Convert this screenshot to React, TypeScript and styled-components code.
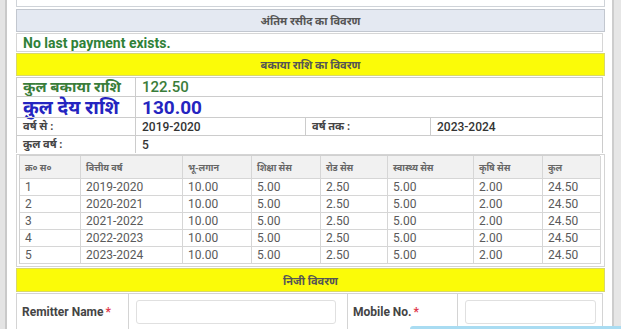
import React from "react";
import styled, { createGlobalStyle } from "styled-components";

const GlobalStyle = createGlobalStyle`
  *, *::before, *::after { box-sizing: border-box; }
  html, body { margin: 0; padding: 0; background: #ffffff; }
  body { font-family: Roboto, "Noto Sans", "Liberation Sans", sans-serif; overflow: hidden; }
`;

type FeeRow = {
  sn: string;
  year: string;
  land: string;
  edu: string;
  road: string;
  health: string;
  agri: string;
  total: string;
};

const feeRows: FeeRow[] = [
  { sn: "1", year: "2019-2020", land: "10.00", edu: "5.00", road: "2.50", health: "5.00", agri: "2.00", total: "24.50" },
  { sn: "2", year: "2020-2021", land: "10.00", edu: "5.00", road: "2.50", health: "5.00", agri: "2.00", total: "24.50" },
  { sn: "3", year: "2021-2022", land: "10.00", edu: "5.00", road: "2.50", health: "5.00", agri: "2.00", total: "24.50" },
  { sn: "4", year: "2022-2023", land: "10.00", edu: "5.00", road: "2.50", health: "5.00", agri: "2.00", total: "24.50" },
  { sn: "5", year: "2023-2024", land: "10.00", edu: "5.00", road: "2.50", health: "5.00", agri: "2.00", total: "24.50" },
];

const feeHeads = ["क्र० स०", "वित्तीय वर्ष", "भू-लगान", "शिक्षा सेस", "रोड सेस", "स्वास्थ्य सेस", "कृषि सेस", "कुल"];

export default function App() {
  return (
    <>
      <GlobalStyle />
      <Shell>
        <LeftRail />
        <Main>
          <TopStub />

          <SectionHead tone="blue">अंतिम रसीद का विवरण</SectionHead>
          <MessageRow>No last payment exists.</MessageRow>

          <SectionHead tone="yellow">बकाया राशि का विवरण</SectionHead>
          <InfoGrid>
            <InfoCell kind="green">कुल बकाया राशि</InfoCell>
            <InfoCell kind="greenValue" span={3}>122.50</InfoCell>
            <InfoCell kind="blue">कुल देय राशि</InfoCell>
            <InfoCell kind="blueValue" span={3}>130.00</InfoCell>
            <InfoCell kind="label">वर्ष से :</InfoCell>
            <InfoCell kind="value">2019-2020</InfoCell>
            <InfoCell kind="label">वर्ष तक :</InfoCell>
            <InfoCell kind="value">2023-2024</InfoCell>
            <InfoCell kind="label">कुल वर्ष :</InfoCell>
            <InfoCell kind="value" span={3}>5</InfoCell>
          </InfoGrid>

          <FeeWrap>
            <FeeGrid>
              {feeHeads.map((h) => (
                <FeeHead key={h}>{h}</FeeHead>
              ))}
              {feeRows.map((r) => (
                <React.Fragment key={r.sn}>
                  <FeeCell>{r.sn}</FeeCell>
                  <FeeCell>{r.year}</FeeCell>
                  <FeeCell>{r.land}</FeeCell>
                  <FeeCell>{r.edu}</FeeCell>
                  <FeeCell>{r.road}</FeeCell>
                  <FeeCell>{r.health}</FeeCell>
                  <FeeCell>{r.agri}</FeeCell>
                  <FeeCell>{r.total}</FeeCell>
                </React.Fragment>
              ))}
            </FeeGrid>
          </FeeWrap>

          <SectionHead tone="yellow" tall>निजी विवरण</SectionHead>
          <FormRow>
            <FormLabel>
              Remitter Name <Req>*</Req>
            </FormLabel>
            <FormField>
              <Input />
            </FormField>
            <FormLabel>
              Mobile No.<Req>*</Req>
            </FormLabel>
            <FormField>
              <Input />
            </FormField>
          </FormRow>
        </Main>
        <RightRail />
        <ToastEdge />
      </Shell>
    </>
  );
}

const Shell = styled.div`
  position: relative;
  display: flex;
  width: 621px;
  height: 329px;
  overflow: hidden;
  background: #ffffff;
`;

const LeftRail = styled.div`
  flex: 0 0 7px;
  background: #e4e4e4;
  border-right: 2px solid #c9c9c9;
`;

const RightRail = styled.div`
  flex: 0 0 9px;
  background: #e6e6e6;
  border-left: 2px solid #cdcdcd;
`;

const Main = styled.div`
  flex: 1;
  display: flex;
  flex-direction: column;
  gap: 1px;
  padding: 0 7px 0 9px;
  min-width: 0;
`;

const TopStub = styled.div`
  height: 7px;
  flex: 0 0 7px;
  border: 1px solid #cfd3d8;
  border-top: none;
  margin-bottom: 1px;
`;

const SectionHead = styled.div<{ tone: "blue" | "yellow"; tall?: boolean }>`
  flex: 0 0 auto;
  height: ${({ tall }) => (tall ? 24 : 23)}px;
  display: flex;
  align-items: center;
  justify-content: center;
  font-size: 11px;
  font-weight: 700;
  color: #555555;
  background: ${({ tone }) => (tone === "blue" ? "#e4e9f2" : "#fbfb08")};
  border: 1px solid ${({ tone }) => (tone === "blue" ? "#c2c7cf" : "#d8d86a")};
`;

const MessageRow = styled.div`
  flex: 0 0 auto;
  height: 19px;
  display: flex;
  align-items: center;
  padding: 0 6px;
  margin: 0 2px 0 0;
  border: 1px solid #d6d6d6;
  font-size: 14px;
  font-weight: 700;
  color: #2f8138;
`;

const InfoGrid = styled.div`
  flex: 0 0 auto;
  display: grid;
  grid-template-columns: 119px 170px 125px 1fr;
  grid-template-rows: 19px 21px 18px 18px;
  border-left: 1px solid #cccccc;
  border-right: 1px solid #cccccc;
  margin-right: 2px;
`;

type CellKind = "green" | "greenValue" | "blue" | "blueValue" | "label" | "value";

const cellFont: Record<CellKind, string> = {
  green: "font-size: 15px; color: #3a7d3a; font-weight: 700;",
  greenValue: "font-size: 15px; color: #3a7d3a; font-weight: 500;",
  blue: "font-size: 19px; color: #2424c0; font-weight: 700;",
  blueValue: "font-size: 19px; color: #2424c0; font-weight: 700;",
  label: "font-size: 11px; color: #444444; font-weight: 700;",
  value: "font-size: 12px; color: #333333; font-weight: 500;",
};

const InfoCell = styled.div<{ kind: CellKind; span?: number }>`
  display: flex;
  align-items: center;
  padding: 0 6px;
  line-height: 1;
  border-top: 1px solid #cccccc;
  border-right: 1px solid #cccccc;
  white-space: nowrap;
  grid-column: span ${({ span }) => span ?? 1};
  ${({ kind }) => cellFont[kind]}
  &:last-child { border-right: none; }
  &:nth-child(2), &:nth-child(4), &:nth-child(8) { border-right: none; }
`;

const FeeWrap = styled.div`
  flex: 0 0 auto;
  padding: 0 4px 2px 2px;
  border: 1px solid #d4d4d4;
`;

const FeeGrid = styled.div`
  display: grid;
  grid-template-columns: 61px 102px 69px 69px 67px 86px 69px 58px;
  grid-template-rows: 23px repeat(5, 17px);
  border: 1px solid #d0d0d0;
  border-right: none;
  border-bottom: none;
`;

const FeeHead = styled.div`
  display: flex;
  align-items: center;
  padding: 0 5px;
  background: #f1f1f1;
  font-size: 9px;
  font-weight: 700;
  color: #666666;
  border-right: 1px solid #d6d6d6;
  border-bottom: 1px solid #d6d6d6;
  white-space: nowrap;
`;

const FeeCell = styled.div`
  display: flex;
  align-items: center;
  padding: 0 5px;
  font-size: 12px;
  color: #5a5a5a;
  border-right: 1px solid #d6d6d6;
  border-bottom: 1px solid #d6d6d6;
`;

const FormRow = styled.div`
  flex: 0 0 auto;
  display: grid;
  grid-template-columns: 112px 219px 110px 1fr;
  height: 40px;
  border: 1px solid #d4d4d4;
  margin-right: 2px;
`;

const FormLabel = styled.div`
  display: flex;
  align-items: center;
  padding: 0 5px 3px;
  font-size: 12px;
  font-weight: 700;
  color: #444444;
  border-right: 1px solid #d4d4d4;
  white-space: nowrap;
`;

const Req = styled.span`
  color: #e0384a;
  margin-left: 2px;
`;

const FormField = styled.div`
  display: flex;
  align-items: center;
  padding: 0 11px 3px 7px;
  border-right: 1px solid #d4d4d4;
  &:last-child { border-right: none; padding-right: 6px; }
`;

const Input = styled.div`
  flex: 1;
  height: 24px;
  border: 1px solid #e0e0e0;
  border-radius: 3px;
  background: #ffffff;
`;

const ToastEdge = styled.div`
  position: absolute;
  left: 410px;
  right: 0;
  bottom: 0;
  height: 3px;
  background: #a9dcf2;
  border-top-left-radius: 3px;
`;
